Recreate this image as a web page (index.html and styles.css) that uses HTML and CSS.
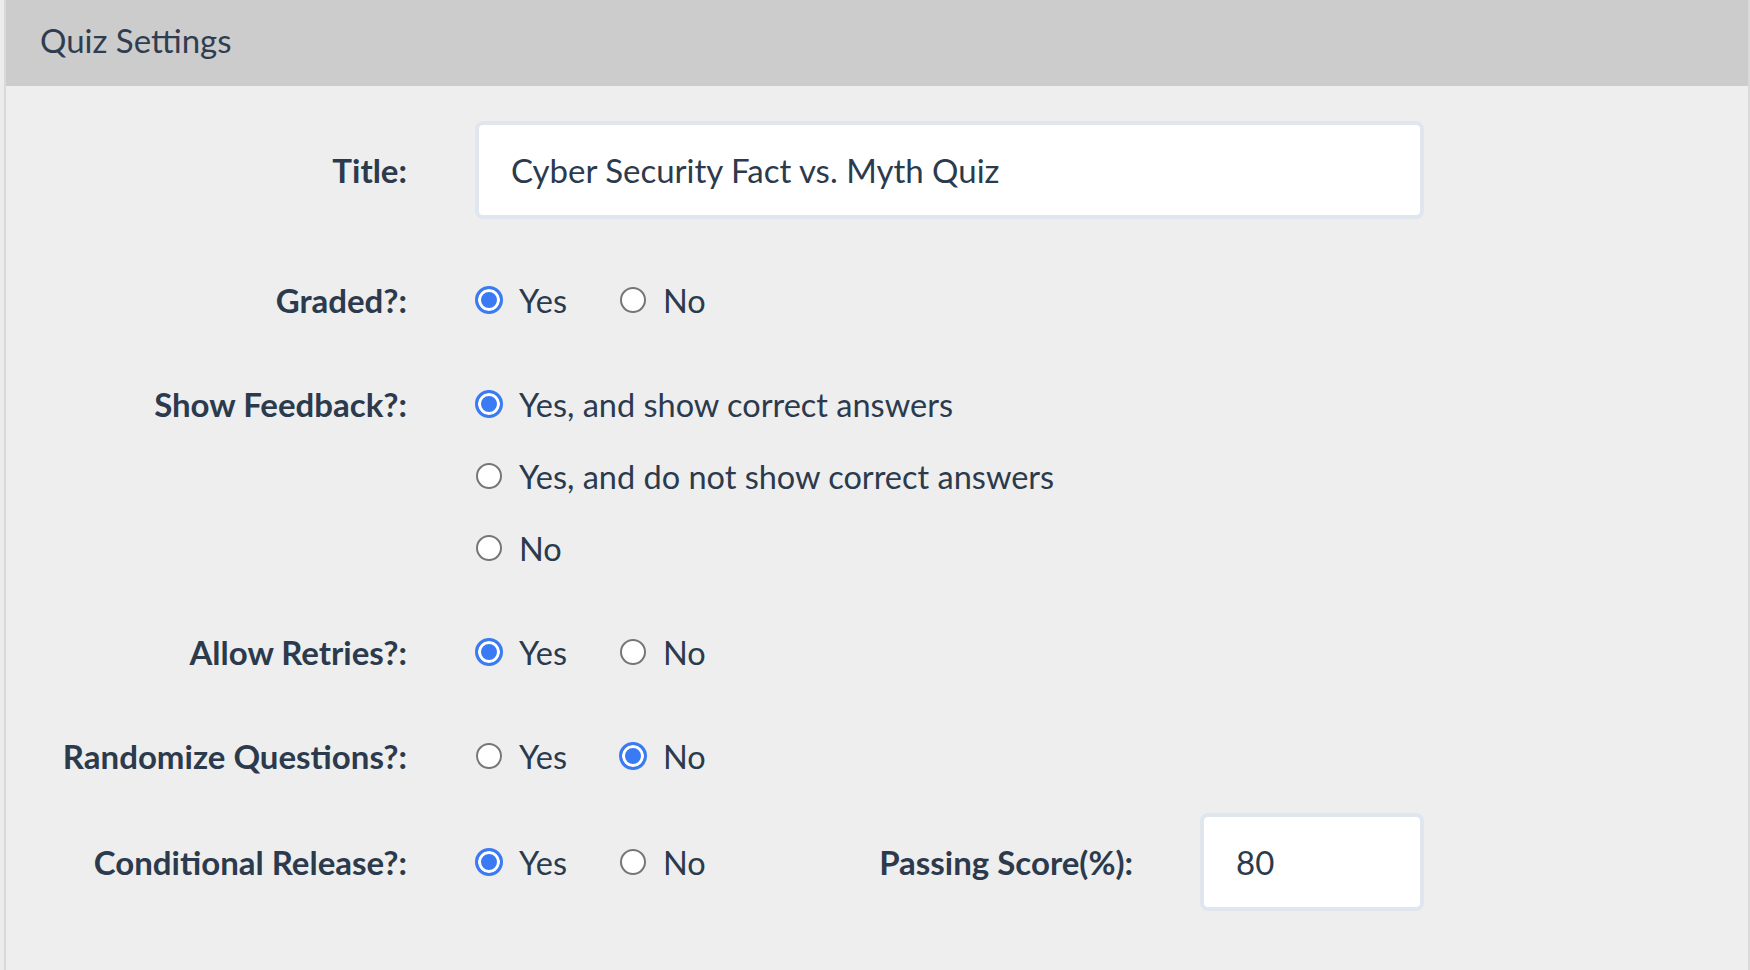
FILE: index.html
```html
<!DOCTYPE html>
<html lang="en">

<head>
    <meta charset="UTF-8">
    <meta name="viewport" content="width=device-width, initial-scale=1.0">
    <title>Quiz Settings</title>
    <link rel="stylesheet" href="styles.css">
</head>

<body>
    <div class="panel">
        <div class="panel-heading">Quiz Settings</div>

        <form class="panel-body">
            <!-- Title -->
            <div class="form-row row-title">
                <label class="field-label" for="quizTitle">Title:</label>
                <div class="field">
                    <input type="text" id="quizTitle" class="text-input" value="Cyber Security Fact vs. Myth Quiz">
                </div>
            </div>

            <div class="form-row row-first">
                <span class="field-label">Graded?:</span>
                <div class="field inline">
                    <label class="option"><input type="radio" name="graded" checked> Yes</label>
                    <label class="option"><input type="radio" name="graded"> No</label>
                </div>
            </div>

            <div class="form-row">
                <span class="field-label">Show Feedback?:</span>
                <div class="field stacked">
                    <label class="option"><input type="radio" name="feedback" checked> Yes, and show correct answers</label>
                    <label class="option"><input type="radio" name="feedback"> Yes, and do not show correct answers</label>
                    <label class="option"><input type="radio" name="feedback"> No</label>
                </div>
            </div>

            <div class="form-row">
                <span class="field-label">Allow Retries?:</span>
                <div class="field inline">
                    <label class="option"><input type="radio" name="retries" checked> Yes</label>
                    <label class="option"><input type="radio" name="retries"> No</label>
                </div>
            </div>

            <div class="form-row">
                <span class="field-label">Randomize Questions?:</span>
                <div class="field inline">
                    <label class="option"><input type="radio" name="randomize"> Yes</label>
                    <label class="option"><input type="radio" name="randomize" checked> No</label>
                </div>
            </div>

            <!-- Conditional release + passing score -->
            <div class="form-row row-last">
                <span class="field-label">Conditional Release?:</span>
                <div class="field inline">
                    <label class="option"><input type="radio" name="conditional" checked> Yes</label>
                    <label class="option"><input type="radio" name="conditional"> No</label>

                    <div class="passing">
                        <label class="field-label" for="passingScore">Passing Score(%):</label>
                        <input type="text" id="passingScore" class="text-input score-input" value="80">
                    </div>
                </div>
            </div>
        </form>
    </div>
</body>

</html>
```

FILE: styles.css
```css
* {
    box-sizing: border-box;
}

body {
    margin: 0;
    padding-left: 4px;
    background-color: #ececec;
    font-family: Lato, "Open Sans", sans-serif;
    color: #2c3a4d;
}

.panel {
    min-height: 100vh;
    background-color: #eeeeee;
    border-left: 2px solid #d9d9d9;
    border-right: 2px solid #d9d9d9;
}

.panel-heading {
    height: 86px;
    padding: 21px 0 0 34px;
    background-color: #cccccc;
    font-size: 33px;
    line-height: 1.2;
    color: #2f3d50;
}

.panel-body {
    padding-top: 35px;
}

.form-row {
    display: grid;
    grid-template-columns: 401px 949px;
    column-gap: 68px;
    align-items: start;
    margin-top: 32px;
}

.row-title {
    margin-top: 0;
    align-items: center;
}

.row-first {
    margin-top: 45px;
}

.row-last {
    margin-top: 21px;
    align-items: center;
}

.field-label {
    text-align: right;
    font-size: 33px;
    font-weight: 700;
    line-height: 72px;
}

.field.inline {
    display: flex;
    align-items: center;
    gap: 52px;
}

.field.stacked {
    display: flex;
    flex-direction: column;
}

.option {
    display: flex;
    align-items: center;
    height: 72px;
    font-size: 32.5px;
}

.option input {
    appearance: none;
    -webkit-appearance: none;
    width: 26px;
    height: 26px;
    margin: 0 17px 0 1px;
    border: 2px solid #767676;
    border-radius: 50%;
    background-color: #fff;
}

.option input:checked {
    width: 28px;
    height: 28px;
    margin-left: 0;
    margin-right: 16px;
    border: 3px solid #3a7af3;
    background-color: #3a7af3;
    box-shadow: inset 0 0 0 3px #fff;
}

.text-input {
    width: 100%;
    height: 98px;
    padding: 0 32px;
    border: 4px solid #dfe6ee;
    border-radius: 8px;
    background-color: #fff;
    font-family: inherit;
    font-size: 33px;
    color: #2c3a4d;
    outline: none;
}

.passing {
    display: flex;
    align-items: center;
    gap: 67px;
    margin-left: auto;
}

.score-input {
    width: 224px;
}
```
